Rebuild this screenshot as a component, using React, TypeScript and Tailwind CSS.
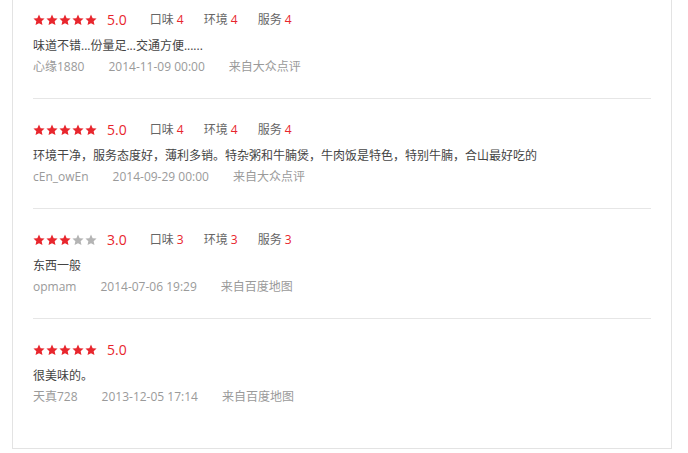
import { FC } from "react";

type Review = {
  score: number;
  taste?: number;
  env?: number;
  service?: number;
  text: string;
  user: string;
  time: string;
  source: string;
};

const reviews: Review[] = [
  {
    score: 5,
    taste: 4,
    env: 4,
    service: 4,
    text: "味道不错...份量足...交通方便......",
    user: "心缘1880",
    time: "2014-11-09 00:00",
    source: "来自大众点评",
  },
  {
    score: 5,
    taste: 4,
    env: 4,
    service: 4,
    text: "环境干净，服务态度好，薄利多销。特杂粥和牛腩煲，牛肉饭是特色，特别牛腩，合山最好吃的",
    user: "cEn_owEn",
    time: "2014-09-29 00:00",
    source: "来自大众点评",
  },
  {
    score: 3,
    taste: 3,
    env: 3,
    service: 3,
    text: "东西一般",
    user: "opmam",
    time: "2014-07-06 19:29",
    source: "来自百度地图",
  },
  {
    score: 5,
    text: "很美味的。",
    user: "天真728",
    time: "2013-12-05 17:14",
    source: "来自百度地图",
  },
];

const Star: FC<{ on: boolean }> = ({ on }) => (
  <svg width="12" height="12" viewBox="0 0 24 24" className={on ? "fill-[#e8262d]" : "fill-[#b4b4b4]"}>
    <path d="M12 1.2l3.3 7.1 7.8.9-5.8 5.3 1.6 7.7L12 18.3l-6.9 3.9 1.6-7.7L.9 9.2l7.8-.9z" />
  </svg>
);

const Rate: FC<{ label: string; value: number }> = ({ label, value }) => (
  <span className="mr-[20px] text-[#666]">
    {label} <span className="text-[#e8262d]">{value}</span>
  </span>
);

const App = () => {
  return (
    <div className="bg-white min-h-screen font-['Open_Sans','Noto_Sans_CJK_SC',sans-serif]">
      <div className="ml-3 w-[660px] border border-t-0 border-[#e3e3e3] px-5 pb-[41px]">
        {reviews.map((r) => (
          <div
            key={r.user}
            className="pt-[21px] pb-[21px] first:pt-[10px] last:pb-0 border-b border-[#e6e6e6] last:border-b-0"
          >
            <div className="flex items-center h-5 text-xs">
              <div className="flex gap-px">
                {[1, 2, 3, 4, 5].map((i) => (
                  <Star key={i} on={i <= r.score} />
                ))}
              </div>
              <span className="ml-[10px] mr-[23px] text-[14px] text-[#e8262d]">{r.score.toFixed(1)}</span>
              {r.taste !== undefined && <Rate label="口味" value={r.taste} />}
              {r.env !== undefined && <Rate label="环境" value={r.env} />}
              {r.service !== undefined && <Rate label="服务" value={r.service} />}
            </div>
            <div className="mt-[6px] h-5 leading-5 text-xs text-[#444]">{r.text}</div>
            <div className="mt-px h-5 leading-5 text-xs text-[#9a9a9a] flex gap-6">
              <span>{r.user}</span>
              <span>{r.time}</span>
              <span>{r.source}</span>
            </div>
          </div>
        ))}
      </div>
    </div>
  );
};

export default App;
